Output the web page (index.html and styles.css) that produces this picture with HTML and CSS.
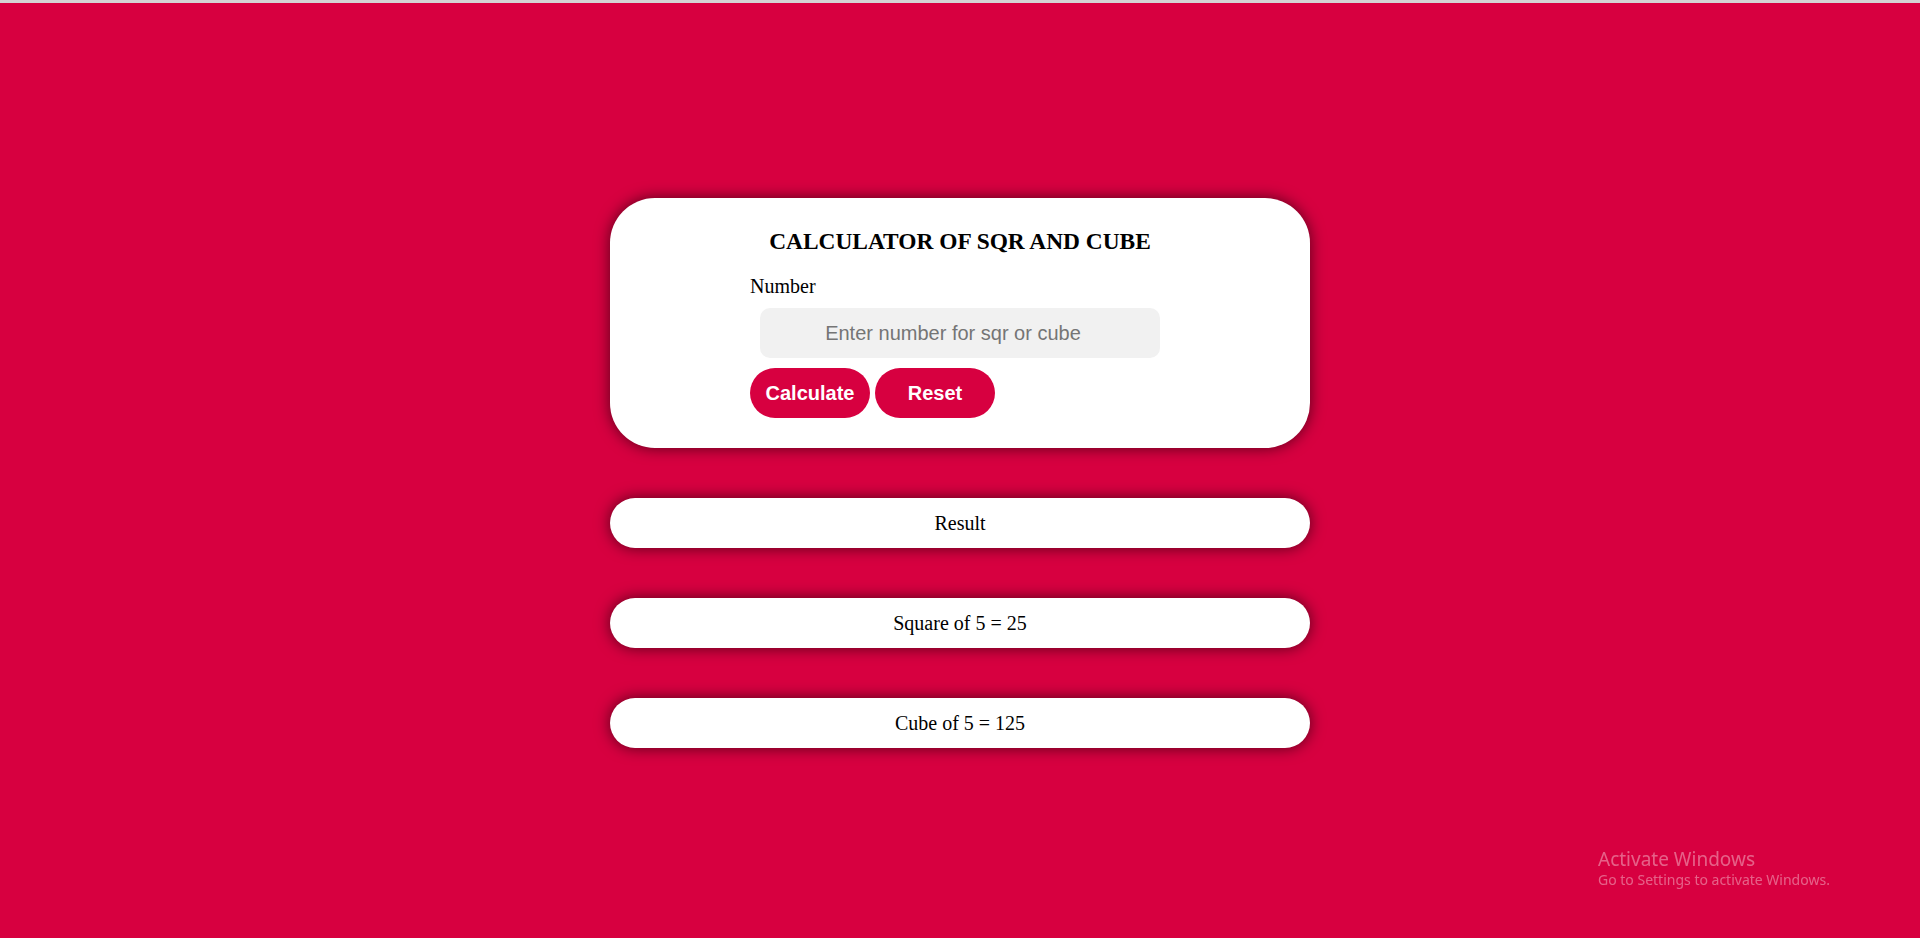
FILE: index.html
```html
<!DOCTYPE html>
<html>
<head>
<meta charset="utf-8">
<title>Calculator of SQR and Cube</title>
<link rel="stylesheet" href="styles.css">
</head>
<body>
<div class="topline"></div>
<main class="page">
  <section class="card">
    <h3 class="title">CALCULATOR OF SQR AND CUBE</h3>
    <label class="label" for="num">Number</label>
    <input class="input" id="num" type="text" placeholder="Enter number for sqr or cube">
    <div class="buttons">
      <button class="btn">Calculate</button>
      <button class="btn">Reset</button>
    </div>
  </section>
  <div class="result">Result</div>
  <div class="result">Square of 5 = 25</div>
  <div class="result">Cube of 5 = 125</div>
</main>
<div class="watermark">
  <div class="wm-title">Activate Windows</div>
  <div class="wm-sub">Go to Settings to activate Windows.</div>
</div>
</body>
</html>
```

FILE: styles.css
```css
html, body {
  margin: 0;
  padding: 0;
  height: 100%;
}
body {
  background: #d70040;
  font-family: "Liberation Serif", "Times New Roman", serif;
  font-size: 20px;
  color: #000;
  overflow: hidden;
}
.topline {
  height: 3px;
  background: #d4d4d4;
}
.page {
  display: flex;
  flex-direction: column;
  align-items: center;
  padding-top: 195px;
}
.card {
  width: 420px;
  padding: 30px 140px;
  background: #fff;
  border-radius: 45px;
  box-shadow: 0 0 15px rgba(0, 0, 0, 0.6);
  display: flex;
  flex-direction: column;
  align-items: flex-start;
}
.title {
  align-self: stretch;
  margin: 0;
  text-align: center;
  font-size: 23.4px;
  font-weight: bold;
  line-height: 27px;
}
.label {
  margin-top: 20px;
  line-height: 23px;
}
.input {
  box-sizing: border-box;
  width: 400px;
  height: 50px;
  margin: 10px 0 0 10px;
  padding: 0 14px 0 0;
  border: none;
  border-radius: 10px;
  background: #f1f1f1;
  font-family: "Liberation Sans", Arial, sans-serif;
  font-size: 20px;
  text-align: center;
  outline: none;
}
.input::placeholder {
  color: #757575;
}
.buttons {
  display: flex;
  gap: 5px;
  margin-top: 10px;
}
.btn {
  width: 120px;
  height: 50px;
  border: none;
  border-radius: 25px;
  background: #d70040;
  color: #fff;
  font-family: "Liberation Sans", Arial, sans-serif;
  font-size: 20px;
  font-weight: bold;
  padding: 0;
}
.result {
  width: 700px;
  height: 50px;
  margin-top: 50px;
  background: #fff;
  border-radius: 25px;
  box-shadow: 0 0 15px rgba(0, 0, 0, 0.6);
  text-align: center;
  line-height: 50px;
}
.watermark {
  position: fixed;
  left: 1598px;
  top: 847px;
  font-family: "Noto Sans", "Open Sans", sans-serif;
  color: rgba(255, 255, 255, 0.38);
}
.wm-title {
  font-size: 19px;
  line-height: 24px;
}
.wm-sub {
  font-size: 14px;
  line-height: 18px;
}
```
